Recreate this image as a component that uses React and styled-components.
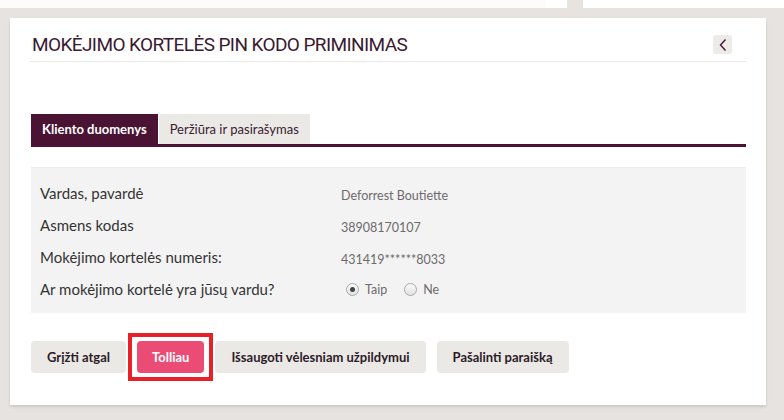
import React from 'react';
import styled, { createGlobalStyle } from 'styled-components';

const colors = {
  frame: '#e6e3e0',
  plum: '#4a1334',
  title: '#3a1a31',
  text: '#333',
  muted: '#6d6a6b',
  panel: '#f3f3f3',
  button: '#eae9e5',
  pink: '#ea4c76',
  red: '#e8202a',
};

const GlobalStyle = createGlobalStyle`
  html, body {
    margin: 0;
    padding: 0;
    background: ${colors.frame};
    font-family: Lato, "Open Sans", sans-serif;
  }
`;

export default function App() {
  return (
    <>
      <GlobalStyle />
      <TopStrip>
        <StripLeft />
        <StripGap />
        <StripBlock />
        <StripRight />
      </TopStrip>
      <Frame>
        <Card>
          <Header>
            <Title>MOKĖJIMO KORTELĖS PIN KODO PRIMINIMAS</Title>
            <BackButton aria-label="Atgal">
              <svg width="10" height="14" viewBox="0 0 10 14">
                <path d="M7.5 1.5 L2.5 7 L7.5 12.5" fill="none" stroke={colors.plum} strokeWidth="1.4" />
              </svg>
            </BackButton>
          </Header>

          <Tabs>
            <Tab active>Kliento duomenys</Tab>
            <Tab>Peržiūra ir pasirašymas</Tab>
          </Tabs>

          <Panel>
            <Row>
              <Label>Vardas, pavardė</Label>
              <Value>Deforrest Boutiette</Value>
            </Row>
            <Row>
              <Label>Asmens kodas</Label>
              <Value>38908170107</Value>
            </Row>
            <Row>
              <Label>Mokėjimo kortelės numeris:</Label>
              <Value>431419******8033</Value>
            </Row>
            <Row>
              <Label>Ar mokėjimo kortelė yra jūsų vardu?</Label>
              <Radios>
                <RadioOption>
                  <RadioCircle checked />
                  Taip
                </RadioOption>
                <RadioOption>
                  <RadioCircle />
                  Ne
                </RadioOption>
              </Radios>
            </Row>
          </Panel>

          <Actions>
            <Button>Grįžti atgal</Button>
            <Highlight>
              <Button primary>Tolliau</Button>
            </Highlight>
            <Button>Išsaugoti vėlesniam užpildymui</Button>
            <Button>Pašalinti paraišką</Button>
          </Actions>
        </Card>
      </Frame>
    </>
  );
}

const TopStrip = styled.div`
  display: flex;
  height: 8px;
`;

const StripLeft = styled.div`
  width: 546px;
  background: #fdfcfa;
`;

const StripGap = styled.div`
  width: 21px;
  background: #fff;
`;

const StripBlock = styled.div`
  width: 16px;
  background: ${colors.frame};
`;

const StripRight = styled.div`
  flex: 1;
  background: #fff;
`;

const Frame = styled.div`
  padding: 10px 18px 15px 10px;
`;

const Card = styled.div`
  width: 756px;
  height: 387px;
  box-sizing: border-box;
  background: #fff;
  box-shadow: 0 2px 3px rgba(0, 0, 0, 0.12);
  padding: 0 20px;
`;

const Header = styled.div`
  display: flex;
  align-items: center;
  justify-content: space-between;
  height: 44px;
  box-sizing: border-box;
  padding: 10px 14px 0 2px;
  border-bottom: 1px solid #e9e8e6;
`;

const Title = styled.h1`
  margin: 0;
  font-family: "Liberation Sans Narrow", Roboto, sans-serif;
  font-weight: 400;
  font-size: 19px;
  letter-spacing: -0.6px;
  color: ${colors.title};
`;

const BackButton = styled.div`
  display: flex;
  align-items: center;
  justify-content: center;
  width: 19px;
  height: 19px;
  border-radius: 3px;
  background: #ecebe8;
`;

const Tabs = styled.div`
  display: flex;
  gap: 1px;
  margin: 52px 0 0 1px;
  border-bottom: 3px solid ${colors.plum};
`;

const Tab = styled.div`
  display: flex;
  align-items: center;
  height: 30px;
  padding: 0 11px;
  font-size: 13px;
  font-weight: ${(p) => (p.active ? 700 : 400)};
  color: ${(p) => (p.active ? '#fff' : colors.title)};
  background: ${(p) => (p.active ? colors.plum : colors.button)};
`;

const Panel = styled.div`
  margin: 20px 0 0 1px;
  padding: 9px 9px 8px;
  background: ${colors.panel};
  border-top: 1px solid #ebebeb;
`;

const Row = styled.div`
  display: grid;
  grid-template-columns: 301px 1fr;
  align-items: center;
  height: 32px;
`;

const Label = styled.div`
  font-size: 15px;
  color: ${colors.text};
`;

const Value = styled.div`
  padding-top: 5px;
  font-size: 12.5px;
  color: ${colors.muted};
`;

const Radios = styled.div`
  display: flex;
  gap: 17px;
  padding: 0 0 0 5px;
`;

const RadioOption = styled.label`
  display: flex;
  align-items: center;
  gap: 6px;
  font-size: 12.5px;
  color: ${colors.muted};
`;

const RadioCircle = styled.span`
  position: relative;
  width: 11px;
  height: 11px;
  border-radius: 50%;
  border: 1px solid #a9a9a9;
  background: linear-gradient(#fafafa, #e2e2e2);

  &::after {
    content: '';
    display: ${(p) => (p.checked ? 'block' : 'none')};
    position: absolute;
    left: 3px;
    top: 3px;
    width: 5px;
    height: 5px;
    border-radius: 50%;
    background: #444;
  }
`;

const Actions = styled.div`
  display: flex;
  align-items: center;
  gap: 11px;
  margin: 28px 0 0 1px;
`;

const Button = styled.div`
  display: flex;
  align-items: center;
  height: 32px;
  padding: 0 ${(p) => (p.primary ? '15px' : '16px')};
  border-radius: 4px;
  font-size: 13px;
  font-weight: 700;
  color: ${(p) => (p.primary ? '#fff' : '#2d1b29')};
  background: ${(p) => (p.primary ? colors.pink : colors.button)};
`;

const Highlight = styled.div`
  margin: -8px -9px -8px -9px;
  padding: 4px 5px;
  border: 4px solid ${colors.red};
  background: #fff;
`;
